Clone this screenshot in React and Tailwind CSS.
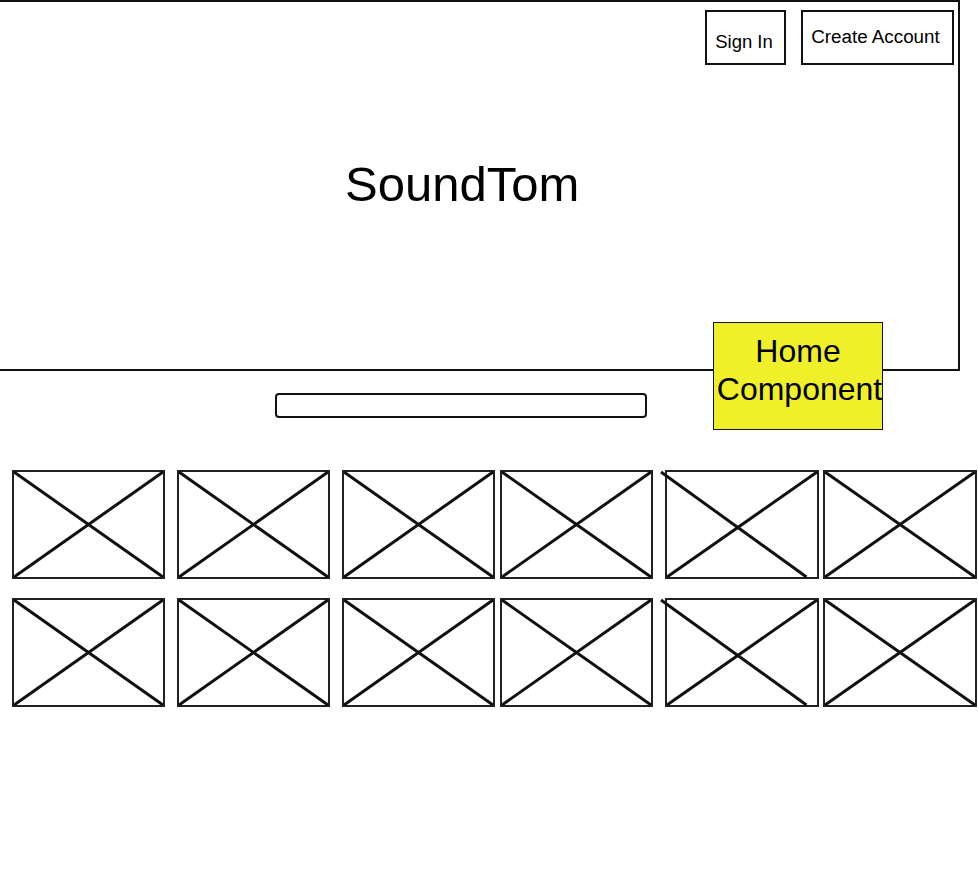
import React from 'react';

const tileMargins = ['ml-0', 'ml-[12px]', 'ml-[12px]', 'ml-[5px]', 'ml-[12px]', 'ml-[4px]'];
const tileWidths = ['w-[153px]', 'w-[153px]', 'w-[153px]', 'w-[153px]', 'w-[154px]', 'w-[154px]'];

function ImageTile({ index }) {
  // placeholder picture: box with a cross
  const skewed = index === 4;
  return (
    <div className={`relative h-[109px] border-2 border-[#222] ${tileMargins[index]} ${tileWidths[index]}`}>
      <svg
        className="absolute inset-0 w-full h-full overflow-visible"
        viewBox="0 0 100 100"
        preserveAspectRatio="none"
      >
        <line
          x1={skewed ? -4 : 0}
          y1="0"
          x2={skewed ? 93 : 100}
          y2="100"
          stroke="#111"
          strokeWidth="3"
          vectorEffect="non-scaling-stroke"
        />
        <line x1="0" y1="100" x2="100" y2="0" stroke="#111" strokeWidth="3" vectorEffect="non-scaling-stroke" />
      </svg>
    </div>
  );
}

export default function App() {
  return (
    <div className="relative w-[978px] h-[880px] overflow-hidden bg-white text-black font-['Liberation_Sans',Arial,sans-serif]">
      {/* header */}
      <div className="w-[960px] h-[371px] border-t-2 border-r-2 border-b-2 border-[#111]">
        <div className="flex justify-end gap-[15px] pt-[8px] pr-[4px]">
          <button className="w-[81px] h-[55px] border-2 border-[#111] flex items-center justify-center pt-[9px] pr-[3px] text-[18.5px] leading-none">
            Sign In
          </button>
          <button className="w-[153px] h-[55px] border-2 border-[#111] flex items-center justify-center pb-[1px] pr-[4px] text-[18.8px] leading-none">
            Create Account
          </button>
        </div>
        <h1 className="mt-[95px] pl-[345px] text-[49px] leading-none">SoundTom</h1>
      </div>

      {/* search */}
      <div className="mt-[22px] ml-[275px] w-[372px] h-[25px] border-2 border-[#111] rounded-[4px]" />

      {/* grid */}
      <div className="mt-[52px] pl-[12px] flex flex-col gap-[19px]">
        {[0, 1].map((row) => (
          <div key={row} className="flex">
            {[0, 1, 2, 3, 4, 5].map((i) => (
              <ImageTile key={i} index={i} />
            ))}
          </div>
        ))}
      </div>

      {/* annotation */}
      <div className="absolute left-[713px] top-[322px] w-[170px] h-[108px] bg-[#f0f02a] border border-[#111] flex flex-col items-center justify-center pb-[12px] text-[32px] leading-[38px]">
        <span>Home</span>
        <span className="pl-[3px]">Component</span>
      </div>
    </div>
  );
}
